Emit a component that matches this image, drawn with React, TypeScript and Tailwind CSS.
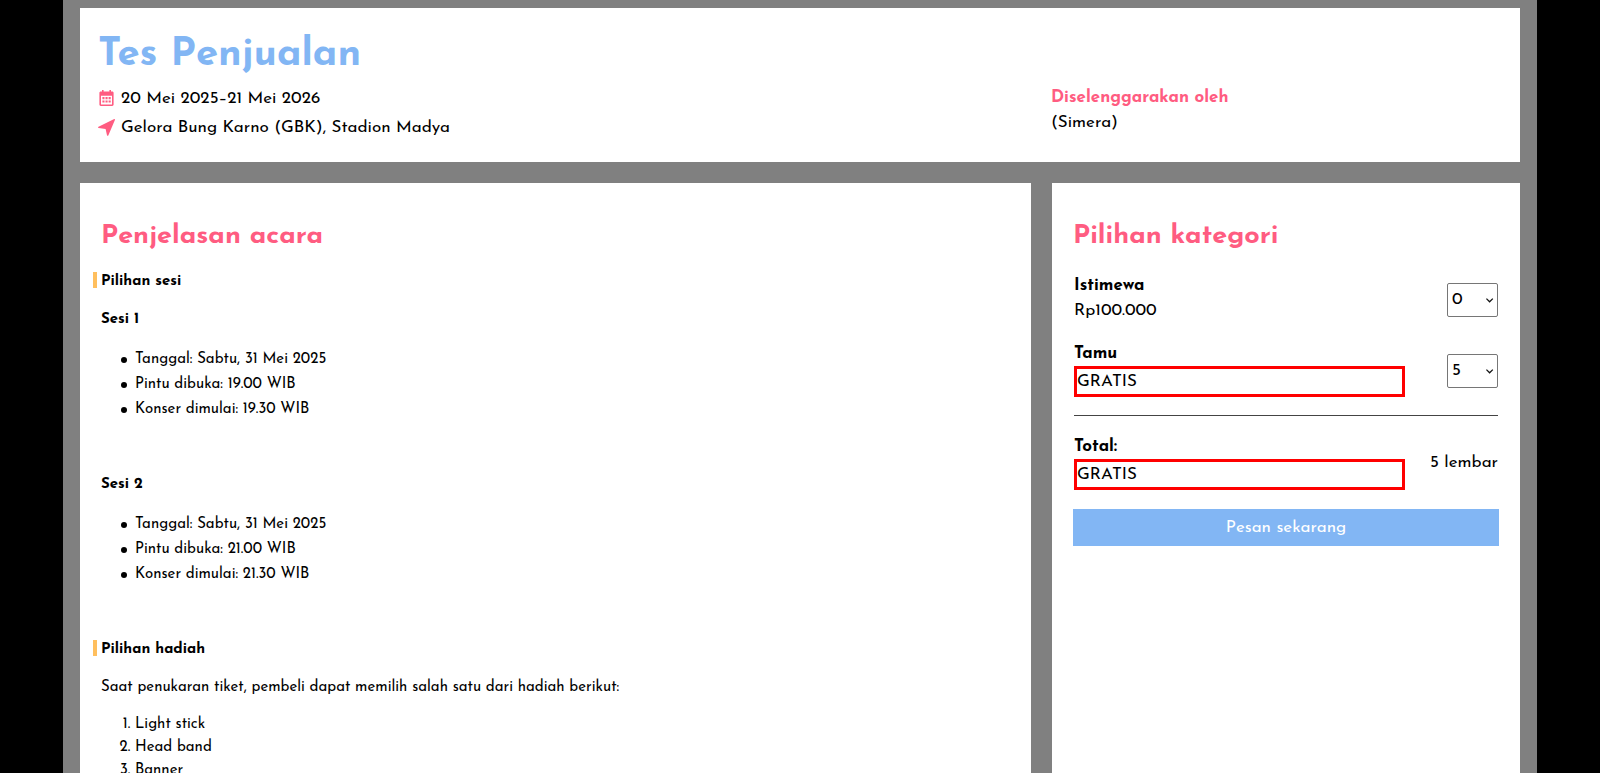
import { useState } from "react";

type Session = { name: string; items: string[] };

const sessions: Session[] = [
  {
    name: "Sesi 1",
    items: ["Tanggal: Sabtu, 31 Mei 2025", "Pintu dibuka: 19.00 WIB", "Konser dimulai: 19.30 WIB"],
  },
  {
    name: "Sesi 2",
    items: ["Tanggal: Sabtu, 31 Mei 2025", "Pintu dibuka: 21.00 WIB", "Konser dimulai: 21.30 WIB"],
  },
];

const gifts = ["Light stick", "Head band", "Banner"];

function CalendarIcon() {
  return (
    <svg className="h-[17px] w-[17px] text-[#ff5c81]" viewBox="0 0 17 17" fill="currentColor" aria-hidden="true">
      <path
        fillRule="evenodd"
        d="M4 0h1.6V1.4h5.8V0H13v1.4h1.2c.8 0 1.4.6 1.4 1.4v11.8c0 .8-.6 1.4-1.4 1.4H2.8c-.8 0-1.4-.6-1.4-1.4V2.8c0-.8.6-1.4 1.4-1.4H4zM3 5.8v8.6h11V5.8z"
      />
      <path d="M4.4 7h2.1v2.2H4.4zM7.5 7h2.1v2.2H7.5zM10.6 7h2.1v2.2h-2.1zM4.4 10.4h2.1v2.2H4.4zM7.5 10.4h2.1v2.2H7.5zM10.6 10.4h2.1v2.2h-2.1z" />
    </svg>
  );
}

function LocationIcon() {
  return (
    <svg className="h-[17px] w-[17px] text-[#ff5c81]" viewBox="0 0 17 17" fill="currentColor" aria-hidden="true">
      <path d="M16.2.1 .5 7.7C-.1 8-.1 8.8.6 9L7.6 10 9 16.3c.2.7 1 .7 1.3.1L16.9.9C17.1.3 16.8-.1 16.2.1z" />
    </svg>
  );
}

function SectionTitle({ children }: { children: string }) {
  return <h2 className="text-[27px] leading-9 font-bold text-[#ff5c81]">{children}</h2>;
}

function MarkedHeading({ children }: { children: string }) {
  return (
    <h3 className="-ml-2 flex items-start gap-1 text-[15px] leading-[22px] font-bold">
      <span className="mt-px h-4 w-1 bg-[#ffbf5e]" />
      {children}
    </h3>
  );
}

function FreeBox() {
  return (
    <p className="h-[31px] border-3 border-[#ff0000] text-[17px] leading-[25px]">GRATIS</p>
  );
}

function Quantity({
  id,
  value,
  onChange,
}: {
  id: string;
  value: number;
  onChange: (value: number) => void;
}) {
  return (
    <div className="relative mt-1">
      <select
        id={id}
        value={value}
        onChange={(event) => onChange(Number(event.target.value))}
        className="block h-[34px] w-[51px] appearance-none rounded-xs border border-[#767676] bg-white pb-0.5 pl-1 text-[17px]"
      >
        {[0, 1, 2, 3, 4, 5].map((n) => (
          <option key={n} value={n}>
            {n}
          </option>
        ))}
      </select>
      <svg
        className="pointer-events-none absolute top-3.5 right-1 h-2 w-2"
        viewBox="0 0 8 8"
        fill="none"
        stroke="#111"
        strokeWidth="1.3"
        aria-hidden="true"
      >
        <path d="M.4 1.6 L3.6 4.8 L6.8 1.6" />
      </svg>
    </div>
  );
}

export default function App() {
  const [special, setSpecial] = useState(0);
  const [guest, setGuest] = useState(5);

  return (
    <div className="h-screen overflow-hidden bg-black px-[63px] font-['Josefin_Sans',Lato,sans-serif] text-black">
      <div className="flex min-h-full flex-col gap-[21px] bg-[#808080] px-[17px] pt-2">
        <header className="grid grid-cols-[951fr_469fr] items-end gap-x-5 bg-white pt-[22px] pb-5">
          <div className="pl-[18px]">
            <h1 className="text-[40px] leading-[50px] font-bold text-[#82b6f4]">Tes Penjualan</h1>
            <p className="mt-1 flex h-[29px] items-center gap-1.5 text-[17px]">
              <CalendarIcon />
              20 Mei 2025–21 Mei 2026
            </p>
            <p className="flex h-[29px] items-center gap-1.5 text-[17px]">
              <LocationIcon />
              Gelora Bung Karno (GBK), Stadion Madya
            </p>
          </div>
          <div className="pb-[7px] text-[17px] leading-[25px]">
            <p className="font-bold text-[#ff5c81]">Diselenggarakan oleh</p>
            <p>(Simera)</p>
          </div>
        </header>

        <div className="grid grow grid-cols-[951fr_468fr] gap-x-[21px]">
          <main className="bg-white px-[21px] pt-9 text-[15px] leading-[22px]">
            <SectionTitle>Penjelasan acara</SectionTitle>
            <div className="mt-4 flex flex-col gap-4">
              <MarkedHeading>Pilihan sesi</MarkedHeading>
              {sessions.map((session) => (
                <section key={session.name} className="pb-9">
                  <h4 className="font-bold">{session.name}</h4>
                  <ul className="mt-4 pl-5 leading-[25px]">
                    {session.items.map((item) => (
                      <li
                        key={item}
                        className="flex items-center gap-2 before:size-1.5 before:rounded-full before:bg-black"
                      >
                        {item}
                      </li>
                    ))}
                  </ul>
                </section>
              ))}
              <MarkedHeading>Pilihan hadiah</MarkedHeading>
              <p>Saat penukaran tiket, pembeli dapat memilih salah satu dari hadiah berikut:</p>
              <ol className="-mt-0.5 list-decimal pl-[34px] leading-[23px]">
                {gifts.map((gift) => (
                  <li key={gift}>{gift}</li>
                ))}
              </ol>
            </div>
          </main>

          <aside className="bg-white px-[21px] pt-9 text-[17px] leading-[25px]">
            <SectionTitle>Pilihan kategori</SectionTitle>
            <form onSubmit={(event) => event.preventDefault()}>
              <div className="px-px">
                <div className="mt-[18px] flex items-center justify-between">
                  <div>
                    <label htmlFor="istimewa" className="block font-bold">
                      Istimewa
                    </label>
                    <p>Rp100.000</p>
                  </div>
                  <Quantity id="istimewa" value={special} onChange={setSpecial} />
                </div>
                <div className="mt-[18px] flex items-center justify-between">
                  <div className="w-[78%]">
                    <label htmlFor="tamu" className="block font-bold">
                      Tamu
                    </label>
                    <FreeBox />
                  </div>
                  <Quantity id="tamu" value={guest} onChange={setGuest} />
                </div>
                <hr className="mt-[18px] border-[#444]" />
                <div className="mt-[18px] flex items-center justify-between">
                  <div className="w-[78%]">
                    <p className="font-bold">Total:</p>
                    <FreeBox />
                  </div>
                  <p>{special + guest} lembar</p>
                </div>
              </div>
              <button type="submit" className="mt-[19px] h-[37px] w-full bg-[#82b6f4] text-white">
                Pesan sekarang
              </button>
            </form>
          </aside>
        </div>
      </div>
    </div>
  );
}
